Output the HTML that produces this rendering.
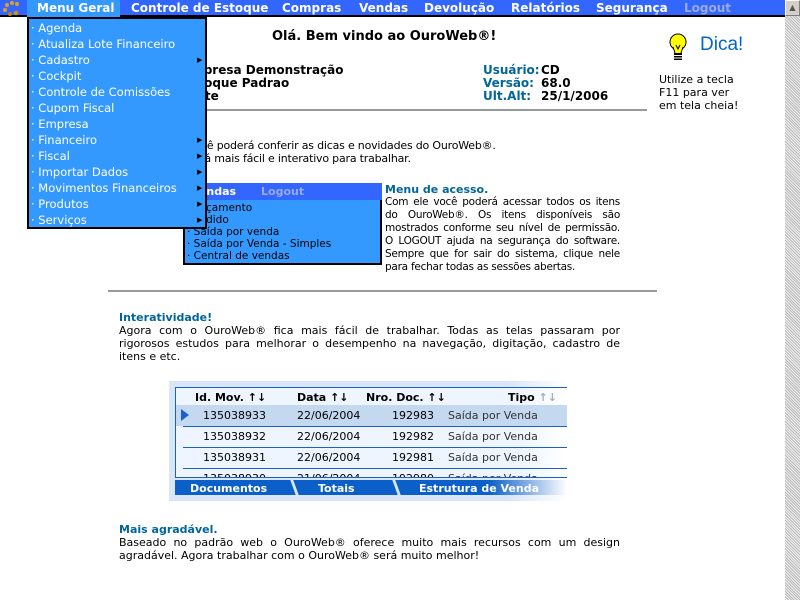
<!DOCTYPE html>
<html><head><meta charset="utf-8"><style>
*{margin:0;padding:0;box-sizing:border-box}
body{width:800px;height:600px;background:#fff;font-family:"DejaVu Sans","Liberation Sans",sans-serif;font-size:11px;color:#000;position:relative;overflow:hidden}
.a{position:absolute;white-space:nowrap}
#bar{left:0;top:0;width:785px;height:17px;background:#3366ff;border-bottom:2px solid #000}
.m{position:absolute;top:1px;color:#fff;font-weight:bold;font-size:12px}
#dd{left:27px;top:17px;width:180px;height:212px;background:#3399ff;border:2px solid #000;z-index:5}
#dd div{position:absolute;left:2px;color:#fff;font-size:11.5px;white-space:nowrap}
#dd span.ar{position:absolute;left:168px;font-size:7px;color:#000}
.b{font-weight:bold}
.h{color:#006699;font-weight:bold}
.j{text-align:justify;white-space:normal}
#sb{left:785px;top:0;width:15px;height:600px;background-color:#ddd;background-image:repeating-linear-gradient(45deg,#bbb 0 1px,#eee 1px 2px)}
</style></head><body>
<div class="a" id="bar">
<svg style="position:absolute;left:2px;top:1px" width="22" height="15"><g fill="#e0a020"><circle cx="5" cy="4" r="2"/><circle cx="10" cy="2" r="2"/><circle cx="15" cy="3" r="2"/><circle cx="3" cy="9" r="2"/><circle cx="8" cy="13" r="2" fill="#c08010"/><circle cx="14" cy="12" r="2.3" fill="#d09010"/></g></svg>
<div style="position:absolute;left:27px;top:0;width:93px;height:17px;background:#3399ff"></div>
<div class="m" style="left:37px">Menu Geral</div>
<div class="m" style="left:131px">Controle de Estoque</div>
<div class="m" style="left:282px">Compras</div>
<div class="m" style="left:359px">Vendas</div>
<div class="m" style="left:424px">Devolução</div>
<div class="m" style="left:511px">Relatórios</div>
<div class="m" style="left:596px">Segurança</div>
<div class="m" style="left:684px;color:#99aadd">Logout</div>
</div>
<div class="a" id="sb"><div style="position:absolute;top:0;left:0;width:15px;height:16px;background:#d4d0c8;border:1px solid #fff;border-right-color:#808080;border-bottom-color:#808080;font-size:8px;color:#555;text-align:center;line-height:14px">▲</div></div>

<div class="a" id="dd">
<div style="top:2px">· Agenda</div>
<div style="top:18px">· Atualiza Lote Financeiro</div>
<div style="top:34px">· Cadastro</div><span class="ar" style="top:37px">▶</span>
<div style="top:50px">· Cockpit</div>
<div style="top:66px">· Controle de Comissões</div>
<div style="top:82px">· Cupom Fiscal</div>
<div style="top:98px">· Empresa</div>
<div style="top:114px">· Financeiro</div><span class="ar" style="top:117px">▶</span>
<div style="top:130px">· Fiscal</div><span class="ar" style="top:133px">▶</span>
<div style="top:146px">· Importar Dados</div><span class="ar" style="top:149px">▶</span>
<div style="top:162px">· Movimentos Financeiros</div><span class="ar" style="top:165px">▶</span>
<div style="top:178px">· Produtos</div><span class="ar" style="top:181px">▶</span>
<div style="top:194px">· Serviços</div><span class="ar" style="top:197px">▶</span>
</div>

<div class="a b" style="left:272px;top:29px;font-size:13px">Olá. Bem vindo ao OuroWeb®!</div>
<div class="a b" style="left:183px;top:64px;font-size:12px;line-height:13px">Empresa Demonstração<br>Estoque Padrao<br>Teste</div>
<div class="a h" style="left:483px;top:64px;font-size:12px;line-height:13px">Usuário:<br>Versão:<br>Ult.Alt:</div>
<div class="a b" style="left:541px;top:64px;font-size:12px;line-height:13px">CD<br>68.0<br>25/1/2006</div>
<div class="a" style="left:108px;top:109px;width:539px;height:2px;background:#999"></div>

<svg class="a" style="left:668px;top:33px" width="20" height="30"><circle cx="10" cy="9" r="8" fill="#ffff00" stroke="#000"/><rect x="6" y="15" width="8" height="5" fill="#ffff00"/><path d="M5 14 L7 20 M15 14 L13 20 M8 12 L10 16 L12 12" stroke="#000" fill="none"/><rect x="6" y="20" width="8" height="7" fill="#000"/><path d="M6 22.5h8M6 25h8" stroke="#fff"/></svg>
<div class="a" style="left:700px;top:34px;font-size:19px;color:#0066cc;font-family:'Liberation Sans',sans-serif">Dica!</div>
<div class="a" style="left:659px;top:73px;line-height:13px">Utilize a tecla<br>F11 para ver<br>em tela cheia!</div>

<div class="a" style="left:188px;top:139px;line-height:13px;letter-spacing:-0.2px">Você poderá conferir as dicas e novidades do OuroWeb®.<br>Está mais fácil e interativo para trabalhar.</div>

<div class="a" style="left:183px;top:183px;width:199px;height:82px;background:#3399ff;border:2px solid #000;border-top:none">
<div style="position:absolute;left:0;top:0;width:197px;height:17px;background:#3366ff"></div>
<div class="a b" style="left:6px;top:2px;color:#fff">Vendas</div>
<div class="a b" style="left:76px;top:2px;color:#99aadd">Logout</div>
<div class="a" style="left:2px;top:19px;line-height:12px;font-size:10.5px">· Orçamento<br>· Pedido<br>· Saída por venda<br>· Saída por Venda - Simples<br>· Central de vendas</div>
</div>

<div class="a h" style="left:385px;top:183px">Menu de acesso.</div>
<div class="a j" style="left:385px;top:196px;width:235px;line-height:13px;font-size:10.5px;letter-spacing:-0.25px">Com ele você poderá acessar todos os itens do OuroWeb®. Os itens disponíveis são mostrados conforme seu nível de permissão. O LOGOUT ajuda na segurança do software. Sempre que for sair do sistema, clique nele para fechar todas as sessões abertas.</div>

<div class="a" style="left:108px;top:290px;width:549px;height:2px;background:#999"></div>
<div class="a h" style="left:119px;top:311px">Interatividade!</div>
<div class="a j" style="left:119px;top:324px;width:501px;line-height:13px">Agora com o OuroWeb® fica mais fácil de trabalhar. Todas as telas passaram por rigorosos estudos para melhorar o desempenho na navegação, digitação, cadastro de itens e etc.</div>

<div class="a" style="left:169px;top:381px;width:398px;height:120px;background:linear-gradient(90deg,#d8e6f8 85%,#fff)">
<div style="position:absolute;left:6px;top:6px;width:392px;height:91px;background:linear-gradient(90deg,#eef5ff 88%,#fff);border:1px solid #1a5fd0;border-right:none;overflow:hidden">
<div class="a b" style="left:19px;top:3px">Id. Mov. ↑↓</div>
<div class="a b" style="left:121px;top:3px">Data ↑↓</div>
<div class="a b" style="left:190px;top:3px">Nro. Doc. ↑↓</div>
<div class="a b" style="left:332px;top:3px">Tipo <span style="color:#aab">↑↓</span></div>
<div class="a" style="left:0;top:17px;width:392px;height:21px;background:#c4d8f0"></div>
<svg class="a" style="left:5px;top:21px" width="8" height="12"><path d="M0 0L8 6L0 12Z" fill="#1a5fd0"/></svg>
<div class="a" style="left:7px;top:38px;width:385px;height:1px;background:#1a5fd0"></div>
<div class="a" style="left:7px;top:59px;width:385px;height:1px;background:#1a5fd0"></div>
<div class="a" style="left:7px;top:80px;width:385px;height:1px;background:#1a5fd0"></div>
<div class="a" style="left:27px;top:17px;line-height:21px">135038933<br>135038932<br>135038931<br>135038930</div>
<div class="a" style="left:121px;top:17px;line-height:21px">22/06/2004<br>22/06/2004<br>22/06/2004<br>21/06/2004</div>
<div class="a" style="left:216px;top:17px;line-height:21px">192983<br>192982<br>192981<br>192980</div>
<div class="a" style="left:272px;top:17px;line-height:21px;color:#333">Saída por Venda<br>Saída por Venda<br>Saída por Venda<br>Saída por Venda</div>
</div>
<div class="a" style="left:6px;top:99px;width:392px;height:15px;background:linear-gradient(90deg,#0a5fc8 80%,#fff)"></div>
<div class="a b" style="left:21px;top:101px;color:#fff">Documentos</div>
<div class="a b" style="left:149px;top:101px;color:#fff">Totais</div>
<div class="a b" style="left:250px;top:101px;color:#fff">Estrutura de Venda</div>
<div class="a" style="left:124px;top:99px;width:3px;height:15px;background:#d8e6f8;transform:skewX(20deg)"></div>
<div class="a" style="left:226px;top:99px;width:3px;height:15px;background:#d8e6f8;transform:skewX(20deg)"></div>
</div>

<div class="a h" style="left:119px;top:523px">Mais agradável.</div>
<div class="a j" style="left:119px;top:536px;width:501px;line-height:13px">Baseado no padrão web o OuroWeb® oferece muito mais recursos com um design agradável. Agora trabalhar com o OuroWeb® será muito melhor!</div>
</body></html>
